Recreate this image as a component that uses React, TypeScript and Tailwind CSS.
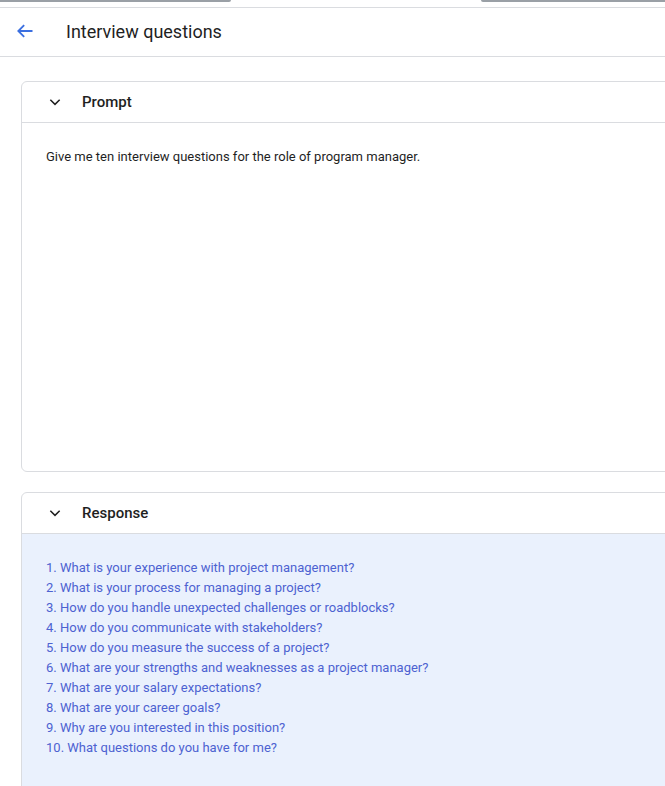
import React from "react";

const questions = [
  "What is your experience with project management?",
  "What is your process for managing a project?",
  "How do you handle unexpected challenges or roadblocks?",
  "How do you communicate with stakeholders?",
  "How do you measure the success of a project?",
  "What are your strengths and weaknesses as a project manager?",
  "What are your salary expectations?",
  "What are your career goals?",
  "Why are you interested in this position?",
  "What questions do you have for me?",
];

function Chevron() {
  return (
    <svg width="14" height="14" viewBox="0 0 24 24" fill="none" stroke="#1f1f1f" strokeWidth="2.6">
      <path d="M4 8l8 8 8-8" />
    </svg>
  );
}

function CardHeader({ title }: { title: string }) {
  return (
    <div className="flex h-[41px] items-center border-b border-[#dadce0] pl-[26px]">
      <Chevron />
      <span className="ml-[20px] text-[15px] font-medium text-[#1f1f1f]">{title}</span>
    </div>
  );
}

export default function App() {
  return (
    <div className="h-[786px] w-[665px] overflow-hidden bg-white font-['Roboto',sans-serif]">
      <div className="flex h-[7px] items-start">
        <div className="h-[2px] w-[231px] rounded-br bg-[#9aa0a6]" />
        <div className="w-[250px]" />
        <div className="h-[2px] flex-1 rounded-bl bg-[#9aa0a6]" />
      </div>
      <header className="flex h-[50px] items-center border-y border-[#dadce0] pb-[2px]">
        <svg className="ml-[15px]" width="20" height="20" viewBox="0 0 24 24" fill="none" stroke="#3b6fe0" strokeWidth="2.2">
          <path d="M21 12H4M11 5l-7 7 7 7" />
        </svg>
        <h1 className="ml-[31px] text-[18px] text-[#1f1f1f]">Interview questions</h1>
      </header>
      <div className="flex w-[700px] flex-col gap-[20px] pl-[21px] pt-[24px]">
        <section className="h-[391px] rounded-l-[6px] border border-[#dadce0]">
          <CardHeader title="Prompt" />
          <p className="pl-[24px] pt-[24px] text-[13px] text-[#1f1f1f]">
            Give me ten interview questions for the role of program manager.
          </p>
        </section>
        <section className="h-[320px] overflow-hidden rounded-l-[6px] border border-[#dadce0]">
          <CardHeader title="Response" />
          <div className="h-full bg-[#eaf1fd] pl-[24px] pt-[24px]">
            <ol className="flex flex-col text-[13px] leading-[20px] text-[#4d62d1]">
              {questions.map((q, i) => (
                <li key={i}>
                  {i + 1}. {q}
                </li>
              ))}
            </ol>
          </div>
        </section>
      </div>
    </div>
  );
}
